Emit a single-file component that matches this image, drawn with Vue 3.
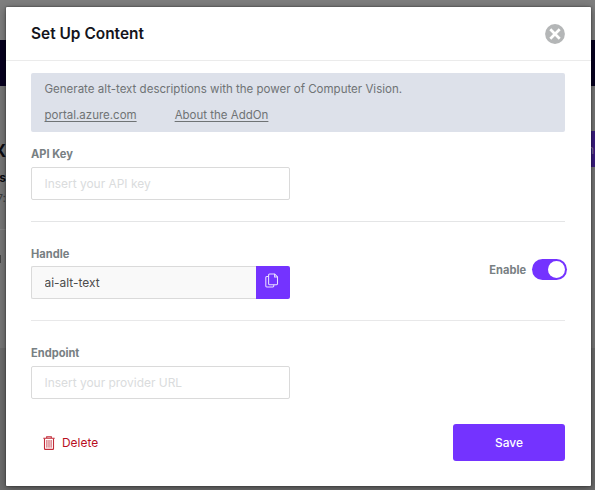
<script setup>
import { ref } from 'vue'

const apiKey = ref('')
const handle = ref('ai-alt-text')
const endpoint = ref('')
const enabled = ref(true)
</script>

<template>
  <div class="screen">
    <div class="page" aria-hidden="true">
      <div class="page-top"></div>
      <div class="page-nav"></div>
      <div class="page-main">
        <div class="page-text">
          <b class="t1">X</b>
          <b class="t2">rs</b>
          <span class="t3">7:</span>
          <span class="rule"></span>
          <span class="mark"></span>
        </div>
        <div class="page-action">n</div>
      </div>
      <div class="page-foot"></div>
    </div>

    <section class="modal" role="dialog">
      <header class="head">
        <h1>Set Up Content</h1>
        <button class="close" aria-label="Close">
          <svg width="20" height="20" viewBox="0 0 20 20">
            <circle cx="10" cy="10" r="9.9" fill="#b4b6b7" />
            <path d="M5.300 5.300l9.400 9.400M14.700 5.300l-9.400 9.400" stroke="#fff" stroke-width="2.700" fill="none" />
          </svg>
        </button>
      </header>

      <div class="body">
        <div class="info">
          <p>Generate alt-text descriptions with the power of Computer Vision.</p>
          <nav>
            <a>portal.azure.com</a>
            <a>About the AddOn</a>
          </nav>
        </div>

        <div class="group first">
          <label>API Key</label>
          <input v-model="apiKey" class="field api" placeholder="Insert your API key" />
        </div>

        <div class="group second">
          <div class="handle">
            <label>Handle</label>
            <div class="joined">
              <input v-model="handle" class="field readonly" readonly />
              <button class="copy" aria-label="Copy">
                <svg width="14" height="16" viewBox="0 0 14 16" fill="none" stroke="#e9dfff" stroke-width="1.05" stroke-linejoin="round">
                  <path d="M4.500 1h5.200l2.800 2.800v7a.9.9 0 0 1-.9.9H4.500a.9.9 0 0 1-.9-.9V1.900a.9.9 0 0 1 .9-.9z" />
                  <path d="M9.600 1v2.900h2.900" />
                  <path d="M3.600 3.500H1.700a.9.9 0 0 0-.9.9v8.700a.9.9 0 0 0 .9.9h6.200a.9.9 0 0 0 .9-.9v-1.400" />
                </svg>
              </button>
            </div>
          </div>
          <div class="enable">
            <span>Enable</span>
            <button class="switch" :class="{ on: enabled }" role="switch" :aria-checked="enabled" @click="enabled = !enabled">
              <i></i>
            </button>
          </div>
        </div>

        <div class="group third">
          <label>Endpoint</label>
          <input v-model="endpoint" class="field" placeholder="Insert your provider URL" />
        </div>

        <footer>
          <button class="delete">
            <svg width="12" height="14" viewBox="0 0 12 14" fill="none" stroke="#c22b38">
              <path d="M.3 2.300h11.400M3.700 2V.8h4.600V2" stroke-width="1.100" />
              <path d="M1.500 2.500v10.200q0 .7.700.7h7.600q.7 0 .7-.7V2.500" stroke-width="1.100" />
              <path d="M3.900 4v7.700M6 4v7.700M8.100 4v7.700" stroke-width=".85" />
            </svg>
            Delete
          </button>
          <button class="save">Save</button>
        </footer>
      </div>
    </section>
  </div>
</template>

<style>
body {
  margin: 0;
  overflow: hidden;
}
</style>

<style scoped>
* {
  box-sizing: border-box;
}
.screen {
  position: relative;
  width: 595px;
  height: 490px;
  overflow: hidden;
  padding: 7px 4.5px 0 6px;
  font-family: Inter, "Liberation Sans", sans-serif;
  font-size: 11.950px;
}
button {
  font: inherit;
  border: 0;
  padding: 0;
  cursor: pointer;
}
.page {
  position: absolute;
  inset: 0;
  display: flex;
  flex-direction: column;
  background: #727272;
}
.page-top {
  height: 40px;
  background: #7e7e7e;
}
.page-nav {
  height: 46px;
  background: #070020;
}
.page-main {
  height: 262px;
  display: flex;
  justify-content: space-between;
  background: #777;
}
.page-text {
  width: 6px;
  padding-top: 53px;
  overflow: hidden;
  display: flex;
  flex-direction: column;
  align-items: flex-end;
  color: #0b0b10;
}
.t1 {
  font-size: 17px;
  line-height: 24px;
}
.t2 {
  font-size: 12px;
  line-height: 29px;
}
.t3 {
  font-size: 12px;
  line-height: 14px;
  color: #3e3e3e;
}
.rule {
  width: 6px;
  height: 1px;
  margin-top: 23px;
  background: #848484;
}
.mark {
  align-self: flex-start;
  width: 1px;
  height: 8px;
  margin-top: 25px;
  background: #444;
}
.page-action {
  width: 8px;
  height: 36px;
  margin-top: 45px;
  background: #3a1c80;
  color: #80739f;
  font-size: 12px;
  line-height: 38px;
}
.page-foot {
  flex: 1;
  background: #6c6c6c;
}
.modal {
  position: relative;
  height: 479px;
  display: flex;
  flex-direction: column;
  background: #fff;
  border-radius: 1px;
  box-shadow: 0 0 2px rgba(0, 0, 0, 0.6), 0 2px 9px rgba(0, 0, 0, 0.38);
}
.head {
  height: 54px;
  display: flex;
  align-items: center;
  justify-content: space-between;
  padding: 0 25.500px 0 25px;
  border-bottom: 1px solid #ebebeb;
}
h1 {
  margin: 0;
  font-size: 15.450px;
  font-weight: 600;
  line-height: 20px;
  color: #14141c;
}
.close {
  width: 20px;
  height: 20px;
  background: none;
}
svg {
  display: block;
}
.body {
  padding: 12px 25.500px 0 25px;
}
.info {
  height: 59px;
  padding: 7px 13.500px 0;
  border-radius: 2px;
  background: #dde1ea;
  color: #6f7375;
}
.info p {
  margin: 0;
  line-height: 18px;
  font-size: 11.520px;
  white-space: nowrap;
}
.info nav {
  display: flex;
  gap: 38px;
  margin-top: 8px;
  line-height: 18px;
  font-size: 11.500px;
}
a {
  text-decoration: underline;
  text-underline-offset: 2px;
}
label {
  display: block;
  height: 16px;
  line-height: 16px;
  font-size: 11.100px;
  font-weight: 700;
  color: #788083;
}
.field {
  display: block;
  width: 258.500px;
  height: 33px;
  margin: 0;
  padding: 0 12.500px;
  border: 1px solid #dadada;
  border-radius: 2px;
  background: #fff;
  color: #4b4b4b;
  font: inherit;
  outline: none;
}
.field::placeholder {
  color: #dadcdd;
  opacity: 1;
}
.first {
  height: 90px;
  padding-top: 14px;
  border-bottom: 1px solid #e4e5e6;
}
.first .field {
  margin-top: 5px;
}
.second {
  height: 99px;
  padding-top: 24px;
  display: flex;
  justify-content: space-between;
  border-bottom: 1px solid #e8e8e9;
}
.joined {
  display: flex;
  margin-top: 4px;
}
.field.readonly {
  width: 224.500px;
  background: #f9f9f9;
  border-right: 0;
  border-radius: 2px 0 0 2px;
}
.copy {
  display: flex;
  align-items: flex-start;
  width: 34px;
  height: 33px;
  padding: 7px 0 0 9px;
  border-radius: 0 2px 2px 0;
  background: #7433ff;
}
.enable {
  display: flex;
  align-items: center;
  gap: 6px;
  height: 21px;
  margin: 13px -2px 0 0;
  color: #788083;
  font-size: 11.100px;
  font-weight: 700;
}
.switch {
  width: 35px;
  height: 21px;
  padding: 2px;
  display: flex;
  border-radius: 11px;
  background: #c4c4c8;
}
.switch.on {
  justify-content: flex-end;
  background: #7433ff;
}
.switch i {
  width: 17px;
  height: 17px;
  border-radius: 50%;
  background: #fff;
}
.third {
  padding-top: 24px;
}
.third .field {
  margin-top: 5px;
}
footer {
  display: flex;
  justify-content: space-between;
  margin-top: 25px;
}
.delete {
  display: flex;
  align-items: center;
  gap: 7px;
  height: 37px;
  padding-left: 12px;
  background: none;
  color: #b8101f;
}
.save {
  width: 112px;
  height: 37px;
  border-radius: 3px;
  background: #7433ff;
  color: #fff;
  font-weight: 500;
}
</style>
